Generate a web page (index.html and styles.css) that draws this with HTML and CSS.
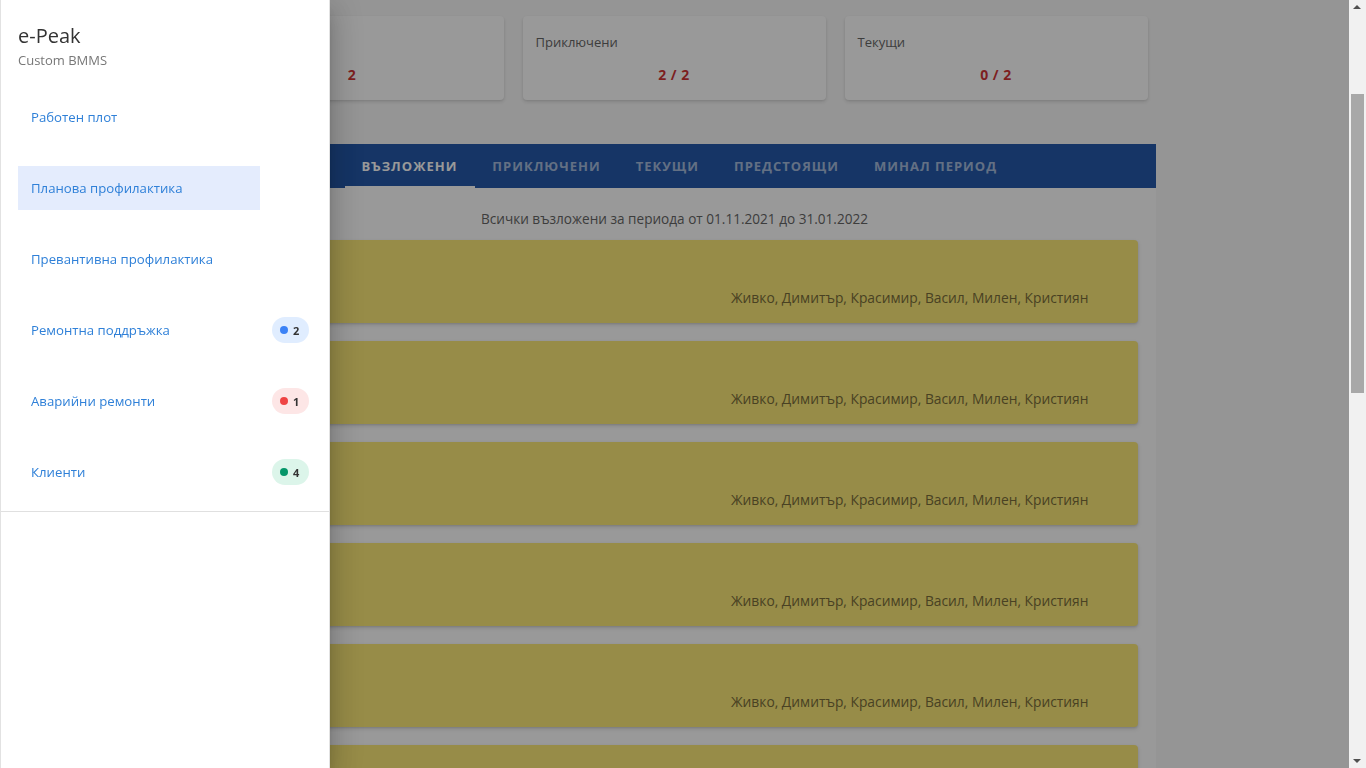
FILE: index.html
```html
<!DOCTYPE html>
<html lang="bg">
<head>
<meta charset="utf-8">
<title>e-Peak — Планова профилактика</title>
<link rel="stylesheet" href="styles.css">
</head>
<body>
<div class="page">
  <main class="main">
    <div class="stats">
      <div class="stat"><div class="stat-label">Възложени</div><div class="stat-value">2</div></div>
      <div class="stat"><div class="stat-label">Приключени</div><div class="stat-value">2 / 2</div></div>
      <div class="stat"><div class="stat-label">Текущи</div><div class="stat-value">0 / 2</div></div>
    </div>
    <section class="panel">
      <nav class="tabs">
        <a class="tab active">Възложени</a>
        <a class="tab">Приключени</a>
        <a class="tab">Текущи</a>
        <a class="tab">Предстоящи</a>
        <a class="tab">Минал период</a>
      </nav>
      <p class="period">Всички възложени за периода от 01.11.2021 до 31.01.2022</p>
      <div class="tasks">
        <div class="task"><span class="task-team">Живко, Димитър, Красимир, Васил, Милен, Кристиян</span></div>
        <div class="task"><span class="task-team">Живко, Димитър, Красимир, Васил, Милен, Кристиян</span></div>
        <div class="task"><span class="task-team">Живко, Димитър, Красимир, Васил, Милен, Кристиян</span></div>
        <div class="task"><span class="task-team">Живко, Димитър, Красимир, Васил, Милен, Кристиян</span></div>
        <div class="task"><span class="task-team">Живко, Димитър, Красимир, Васил, Милен, Кристиян</span></div>
        <div class="task"></div>
      </div>
    </section>
  </main>
</div>

<div class="scrim"></div>

<div class="scrollbar" aria-hidden="true">
  <span class="sb-arrow sb-up"></span>
  <span class="sb-thumb"></span>
  <span class="sb-arrow sb-down"></span>
</div>

<aside class="drawer">
  <div class="drawer-head">
    <div class="brand">e-Peak</div>
    <div class="brand-sub">Custom BMMS</div>
  </div>
  <ul class="nav">
    <li class="nav-row"><a class="nav-link">Работен плот</a></li>
    <li class="nav-row"><a class="nav-link active">Планова профилактика</a></li>
    <li class="nav-row"><a class="nav-link">Превантивна профилактика</a></li>
    <li class="nav-row"><a class="nav-link">Ремонтна поддръжка</a><span class="badge badge-blue"><i class="dot"></i>2</span></li>
    <li class="nav-row"><a class="nav-link">Аварийни ремонти</a><span class="badge badge-red"><i class="dot"></i>1</span></li>
    <li class="nav-row"><a class="nav-link">Клиенти</a><span class="badge badge-green"><i class="dot"></i>4</span></li>
  </ul>
</aside>
</body>
</html>
```

FILE: styles.css
```css
* { box-sizing: border-box; }

html, body {
  margin: 0;
  padding: 0;
}

body {
  background: #f8f8f8;
  font-family: "Open Sans", "Noto Sans", "DejaVu Sans", sans-serif;
  color: #333;
  height: 768px;
  overflow: hidden;
}

.page {
  padding-right: 17px;
}

.main {
  max-width: 962px;
  margin: 0 auto;
  padding-top: 16px;
}

/* stat cards */
.stats {
  display: flex;
  gap: 19px;
  padding: 0 8px 0 7px;
}

.stat {
  flex: 1;
  height: 84px;
  background: #fff;
  border-radius: 4px;
  box-shadow: 0 2px 4px rgba(0, 0, 0, .12), 0 1px 2px rgba(0, 0, 0, .08);
  padding: 17px 13px 0 13px;
}

.stat-label {
  font-size: 13px;
  line-height: 18px;
  color: #555;
}

.stat-value {
  margin-top: 14px;
  text-align: center;
  font-size: 14px;
  line-height: 20px;
  font-weight: 700;
  color: #cc1f1f;
  letter-spacing: .5px;
}

/* panel */
.panel {
  margin-top: 44px;
  background: #fff;
  padding-bottom: 18px;
}

.tabs {
  height: 44px;
  background: #0d47a1;
  display: flex;
  padding-left: 151px;
}

.tab {
  display: flex;
  align-items: center;
  padding: 0 18px 0 17px;
  font-size: 13px;
  font-weight: 700;
  letter-spacing: 1px;
  text-transform: uppercase;
  color: rgba(255, 255, 255, .6);
  position: relative;
  cursor: pointer;
}

.tab.active {
  color: #fff;
}

.tab.active::after {
  content: "";
  position: absolute;
  left: 0;
  right: 0;
  bottom: 0;
  height: 2px;
  background: #fff;
}

.period {
  margin: 0;
  padding: 22px 0 12px;
  text-align: center;
  font-size: 13.6px;
  line-height: 18px;
  color: #555;
}

.tasks {
  display: flex;
  flex-direction: column;
  gap: 18px;
  padding: 0 18px;
}

.task {
  height: 83px;
  flex: none;
  background: #fbe76a;
  border-radius: 4px;
  box-shadow: 0 2px 4px rgba(0, 0, 0, .14), 0 1px 2px rgba(0, 0, 0, .1);
  display: flex;
  justify-content: flex-end;
  padding: 49px 49px 0 0;
}

.task-team {
  font-size: 13.8px;
  line-height: 18px;
  color: #6b5d25;
}

/* overlay */
.scrim {
  position: fixed;
  top: 0;
  bottom: 0;
  left: 0;
  right: 17px;
  background: rgba(33, 33, 33, .46);
  z-index: 5;
}

/* browser scrollbar */
.scrollbar {
  position: fixed;
  top: 0;
  right: 0;
  bottom: 0;
  width: 17px;
  background: #f1f1f1;
  z-index: 6;
}

.sb-thumb {
  position: absolute;
  left: 2px;
  right: 2px;
  top: 94px;
  height: 299px;
  background: #a8a8a8;
}

.sb-arrow {
  position: absolute;
  left: 4px;
  width: 0;
  height: 0;
  border-left: 4px solid transparent;
  border-right: 4px solid transparent;
}

.sb-up {
  top: 5px;
  border-bottom: 4px solid #505050;
}

.sb-down {
  bottom: 5px;
  border-top: 4px solid #505050;
}

/* drawer */
.drawer {
  position: fixed;
  top: 0;
  left: 0;
  bottom: 0;
  width: 330px;
  background: #fff;
  border-left: 1px solid #e2e2e2;
  border-right: 1px solid #e2e2e2;
  z-index: 10;
  box-shadow: 0 8px 10px -5px rgba(0, 0, 0, .2), 0 16px 24px 2px rgba(0, 0, 0, .14), 0 6px 30px 5px rgba(0, 0, 0, .12);
}

.drawer-head {
  padding: 23px 0 0 17px;
}

.brand {
  font-size: 20px;
  line-height: 26px;
  color: #333;
}

.brand-sub {
  margin-top: 2px;
  font-size: 13px;
  line-height: 18px;
  color: #777;
}

.nav {
  list-style: none;
  margin: 0;
  padding: 26px 0 17px 17px;
  display: flex;
  flex-direction: column;
  gap: 27px;
  border-bottom: 1px solid #e0e0e0;
}

.nav-row {
  display: flex;
  align-items: center;
}

.nav-link {
  width: 242px;
  height: 44px;
  display: flex;
  align-items: center;
  padding-left: 13px;
  font-size: 13.2px;
  color: #2f80d8;
  cursor: pointer;
}

.nav-link.active {
  background: #e4ecfd;
}

.badge {
  margin-left: 12px;
  height: 26px;
  display: inline-flex;
  align-items: center;
  gap: 5px;
  padding: 0 10px 0 8px;
  border-radius: 13px;
  font-size: 11px;
  font-weight: 700;
  color: #333;
}

.dot {
  width: 8px;
  height: 8px;
  border-radius: 50%;
  display: inline-block;
}

.badge-blue { background: #e0edff; }
.badge-blue .dot { background: #3b82f6; }
.badge-red { background: #fde6e6; }
.badge-red .dot { background: #ef4444; }
.badge-green { background: #dcf5ea; }
.badge-green .dot { background: #059669; }
```
